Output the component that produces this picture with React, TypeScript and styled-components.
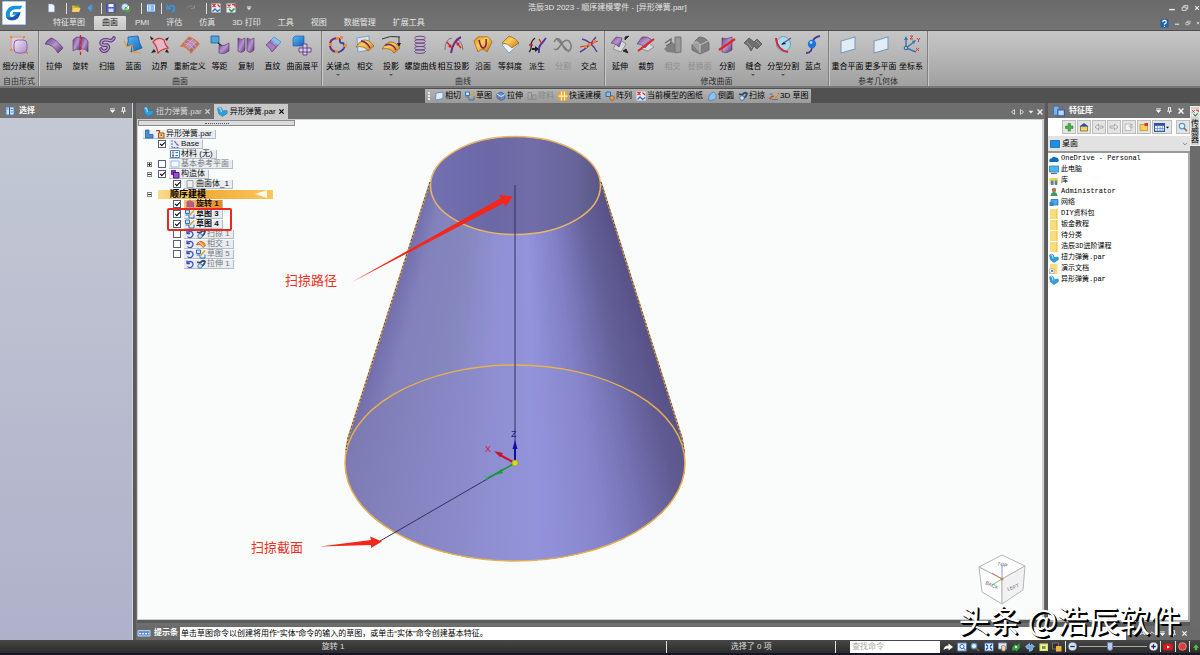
import React from "react";
import styled, { createGlobalStyle, css } from "styled-components";

const GlobalStyle = createGlobalStyle`
  * { box-sizing: border-box; }
  html, body { margin: 0; padding: 0; }
  body {
    background: #555;
    font-family: "Liberation Sans", "Noto Sans CJK SC", sans-serif;
    font-size: 8px;
    line-height: 10px;
    overflow: hidden;
  }
  button, input, select { font: inherit; color: inherit; }
  button { border: 0; background: none; padding: 0; margin: 0; }
  ul { list-style: none; margin: 0; padding: 0; }
`;

/* ---------- icons ---------- */

const Svg = styled.svg<{ $s: number }>`
  display: block;
  flex: none;
  width: ${(p) => p.$s}px;
  height: ${(p) => p.$s}px;
  overflow: visible;
`;

const sheet = "M1 10 Q3 6 8 3 Q14 2 19 9 L13 14 Q9 8 1 10Z";

const drawings: Record<string, React.ReactNode> = {
  subdivide: (
    <>
      <rect x="2" y="2" width="13" height="13" rx="3" fill="#d9cbe6" stroke="#e09a62" />
      <rect x="5" y="5" width="13" height="13" rx="4" fill="url(#lilac)" stroke="#8a62a8" />
      <path d="M1 1h2v2H1zM14 1h2v2h-2zM1 14h2v2H1zM17 17h2v2h-2z" fill="#e58a35" />
    </>
  ),
  extrudeSurf: <path d="M1 9 Q3 5 7 3 Q12 4 19 13 L14 18 Q9 9 1 9Z" fill="url(#purple)" stroke="#553070" strokeWidth=".7" />,
  revolveSurf: (
    <>
      <path d="M3 5 Q6 1 10 2 V15 Q6 13 3 16Z" fill="url(#purple)" stroke="#553070" strokeWidth=".6" />
      <path d="M11 2 Q16 2 18 6 V17 Q15 13 11 14Z" fill="url(#purple)" stroke="#553070" strokeWidth=".6" />
      <path d="M10.5 0V20" stroke="#e02020" strokeWidth="1.3" strokeDasharray="4 1.5" />
    </>
  ),
  sweepSurf: (
    <>
      <path d="M17 3 Q15 7 11 5 Q5 4 4 8 Q5 11 10 10 Q13 12 10 15 Q6 18 4 14" fill="none" stroke="#5f3a80" strokeWidth="3.600" strokeLinecap="round" />
      <path d="M17 3 Q15 7 11 5 Q5 4 4 8 Q5 11 10 10 Q13 12 10 15 Q6 18 4 14" fill="none" stroke="#b79bcb" strokeWidth="1.400" strokeLinecap="round" />
    </>
  ),
  loft: (
    <>
      <path d="M5 2 L15 1 Q16 8 19 13 L8 17 L9 10 L4 11 Q6 6 5 2Z" fill="url(#blue)" stroke="#1559a8" strokeWidth=".8" />
      <path d="M1 6 L4 12 L9 10 L10 17 L18 18" stroke="#e3a02c" strokeWidth="1.2" fill="none" />
    </>
  ),
  boundary: (
    <>
      <path d="M3 7 Q8 1 14 5 Q15 10 18 13 Q12 14 8 18 Q7 11 3 7Z" fill="#e3b7c5" stroke="#d0343c" strokeWidth="1.2" />
      <path d="M0 1l4 3-3 1zM19 2l-4 2 2 2zM1 18l3-4 2 3zM19 18l-4-1 2-3z" fill="#222" />
    </>
  ),
  redefine: (
    <>
      <path d="M1 11 L9 2 Q15 4 19 9 L11 18 Q7 11 1 11Z" fill="url(#purple)" stroke="#e8762a" strokeWidth="1.3" />
      <path d="M4 8 Q11 9 14 15 M7 5 Q14 7 16 12 M6 11 L13 4 M9 14 L16 7" stroke="#e9b9a0" strokeWidth=".7" fill="none" />
    </>
  ),
  offset: (
    <>
      <path d="M1 1h8v7H1z" fill="#4fa6de" stroke="#1e5d96" strokeWidth=".8" />
      <path d="M8 8l4 3" stroke="#222" strokeWidth="1.2" />
      <path d="M9 10 Q14 12 19 8 V16 Q14 20 9 18Z" fill="url(#purple)" stroke="#553070" strokeWidth=".6" />
    </>
  ),
  copySurf: (
    <>
      <path d="M2 3 Q6 6 9 3 V15 Q6 19 2 16Z" fill="url(#purple)" stroke="#553070" strokeWidth=".6" />
      <path d="M11 3 Q15 6 18 3 V15 Q15 19 11 16Z" fill="url(#purple)" stroke="#553070" strokeWidth=".6" />
    </>
  ),
  ruled: (
    <>
      <path d="M3 10 L11 2 L18 7 L9 17 Q7 12 3 10Z" fill="url(#purple)" stroke="#6b3d88" strokeWidth=".7" />
      <path d="M8 5 L11 2 L18 7 L15 10Z" fill="#7cc6e8" />
      <path d="M3 10 L6 7 Q11 9 13 12 L9 17 Q7 12 3 10Z" fill="#a77cc0" stroke="#6b3d88" strokeWidth=".5" />
    </>
  ),
  flatten: (
    <>
      <path d="M1 3l2-2h9v8l-2 2H1z" fill="url(#blue)" stroke="#1559a8" strokeWidth=".6" />
      <path d="M7 13h12v4H7zM11 9h4v11h-4z" fill="#dccbe8" stroke="#5f3a80" strokeWidth=".9" />
    </>
  ),
  keypoint: (
    <>
      <path d="M9 3 Q1 4 2 11 Q3 16 8 17" fill="none" stroke="#6b2f7c" strokeWidth="2" />
      <path d="M12 3 Q11 9 15 8 Q19 12 13 16 Q10 18 8 17" fill="none" stroke="#4a3a9a" strokeWidth="1.8" />
      <path d="M8 2h3v3H8zM7 15h3v3H7zM16 9h3v3h-3zM1 8h3v3H1zM12 1h3v3h-3z" fill="#ef8b2c" />
    </>
  ),
  intersectCrv: (
    <>
      <path d="M2 3 L14 1 V15 L3 17Z" fill="#d7e6f2" stroke="#5b8bb5" strokeWidth=".7" />
      <path d={sheet} transform="translate(0 2)" fill="url(#orange)" stroke="#9a5b10" strokeWidth=".7" />
      <path d="M6 6 Q12 7 15 13" stroke="#7a2168" strokeWidth="1.4" fill="none" />
    </>
  ),
  project: (
    <>
      <path d="M1 4 Q9 0 19 2 M18 2v7" stroke="#333" strokeWidth="1" fill="none" />
      <path d="M16 8h4l-2 4z" fill="#222" />
      <path d={sheet} transform="translate(0 4)" fill="url(#orange)" stroke="#9a5b10" strokeWidth=".7" />
      <path d="M4 10 Q12 8 15 15" stroke="#7a2168" strokeWidth="1.4" fill="none" />
    </>
  ),
  helix: (
    <g fill="none" stroke="#704690" strokeWidth="1">
      <ellipse cx="9" cy="3" rx="5.5" ry="1.8" />
      <ellipse cx="9" cy="6.4" rx="5.5" ry="1.8" />
      <ellipse cx="9" cy="9.8" rx="5.5" ry="1.8" />
      <ellipse cx="9" cy="13.2" rx="5.5" ry="1.8" />
      <ellipse cx="9" cy="16.600" rx="5.5" ry="1.8" />
    </g>
  ),
  crossProject: (
    <>
      <path d="M1 15 Q1 4 8 3 M19 15 Q18 5 12 4" fill="none" stroke="#777" strokeWidth="1" />
      <path d="M7 18 Q9 6 17 2" fill="none" stroke="#67308a" strokeWidth="2" />
      <path d="M3 7l3 4M14 9l3 4" stroke="#d22" strokeWidth="1.4" />
      <path d="M8 13l-4-1 3-3zM12 7l4 1-3 3z" fill="#d22" />
    </>
  ),
  contour: (
    <>
      <path d="M1 6 Q5 0 10 2 Q16 0 19 7 L14 17 Q10 12 5 17Z" fill="url(#orange)" stroke="#9a5b10" strokeWidth=".7" />
      <path d="M6 5 Q8 14 11 13 Q14 11 13 4" fill="none" stroke="#7a1f50" strokeWidth="1.5" />
    </>
  ),
  isocline: (
    <>
      <path d="M2 10 L12 2 L19 9 L9 18Z" fill="#eef3f8" stroke="#6a94c0" strokeWidth=".8" />
      <path d="M2 8 L9 1 Q16 3 19 8 L12 13 Q8 8 2 8Z" fill="url(#orange)" stroke="#9a5b10" strokeWidth=".7" />
    </>
  ),
  derive: (
    <>
      <path d="M2 17 Q5 14 4 9 Q5 5 8 3" stroke="#222" strokeWidth="1.3" fill="none" />
      <path d="M12 18 Q11 12 15 8 L19 3" stroke="#4c3aa8" strokeWidth="2" fill="none" />
      <path d="M2 10h4M12 4l3 5" stroke="#d22" strokeWidth="1.4" />
      <path d="M5 13h3v-2l4 3-4 3v-2H5z" fill="#222" />
    </>
  ),
  splitCrv: (
    <path d="M1 7 Q5 0 9 8 Q12 18 17 15 Q20 11 16 6 Q12 3 7 11 Q4 16 1 14 M3 3l13 14" fill="none" stroke="#7c7c7c" strokeWidth="1.5" />
  ),
  crossPoint: (
    <>
      <path d="M1 17 Q9 13 17 2 M3 4 Q12 6 18 17" fill="none" stroke="#5a3c9c" strokeWidth="1.4" />
      <path d="M1 12 Q10 11 19 6" stroke="#c33" strokeWidth="1" fill="none" />
      <path d="M9 8h3v3H9zM14 5h3v3h-3zM5 10h3v3H5z" fill="#ef7f2c" />
    </>
  ),
  extend: (
    <>
      <path d="M9 4 L16 9 L11 17 L3 14Z" fill="#d6d8dc" stroke="#777" strokeWidth=".7" />
      <path d="M1 8 L6 2 L12 3 Q11 8 9 12 Q5 8 1 8Z" fill="url(#purple)" stroke="#553070" strokeWidth=".6" />
      <path d="M15 5l4-4-4 1zM13 16l5 2-2-4z" fill="#222" stroke="#222" strokeWidth=".8" />
    </>
  ),
  trim: (
    <>
      <path d="M9 5 L18 12 L12 16 L5 14Z" fill="#d8d8dd" stroke="#777" strokeWidth=".7" />
      <path d="M1 9 L6 2 Q12 1 16 5 L9 13 Q5 8 1 9Z" fill="url(#purple)" stroke="#553070" strokeWidth=".6" />
      <path d="M2 16 L18 4" stroke="#e02525" strokeWidth="2" />
    </>
  ),
  intersectGray: (
    <>
      <path d="M1 14 L9 7 L12 9 V18 L4 17Z" fill="#808080" />
      <path d="M12 2h6v15l-6 1z" fill="#999" stroke="#757575" />
      <path d="M2 8l6-4v4M3 11l5-3" stroke="#6a6a6a" strokeWidth="1.4" fill="none" />
    </>
  ),
  replaceGray: (
    <>
      <path d="M2 9 L9 2 Q16 2 19 8 V15 L10 19 L2 15Z" fill="#808080" stroke="#666" strokeWidth=".8" />
      <path d="M2 9 Q7 4 10 10 L10 18" fill="#9e9e9e" stroke="#c2c2c2" strokeWidth="1" />
      <path d="M10 10 L18 6" stroke="#c2c2c2" />
    </>
  ),
  splitSurf: (
    <>
      <path d="M5 3 Q9 5 15 2 V15 Q10 19 5 17Z" fill="url(#purple)" stroke="#553070" strokeWidth=".6" />
      <path d="M2 15 L18 4" stroke="#e02525" strokeWidth="2.2" />
    </>
  ),
  stitch: (
    <>
      <path d="M1 8 L6 3 L11 7 L14 4 L19 9 L14 14 L11 11 L8 16 Q5 9 1 8Z" fill="#6f6f6f" stroke="#565656" strokeWidth=".8" />
      <path d="M4 7l5 6M13 6l4 4" stroke="#9c9c9c" />
    </>
  ),
  partingSplit: (
    <>
      <ellipse cx="10.500" cy="9" rx="7" ry="7.500" fill="#a8dcec" stroke="#5398b0" strokeWidth=".8" />
      <path d="M3 3 Q4 15 15 17" stroke="#d92340" strokeWidth="2" fill="none" />
      <path d="M9 9 L18 3" stroke="#7b4a9a" strokeWidth="1.3" />
      <path d="M8 10l5-1-2-2z" fill="#222" />
    </>
  ),
  bluedot: (
    <>
      <path d="M3 18 Q10 18 9 9 Q10 2 17 1" fill="none" stroke="#4a3a98" strokeWidth="1.8" />
      <circle cx="9" cy="9" r="4.2" fill="#1d73dc" />
      <circle cx="8" cy="7.5" r="1.4" fill="#a9d4ff" />
    </>
  ),
  plane: <path d="M3 6 L17 2 V14 L3 18Z" fill="#e2ecf5" stroke="#7d9cbc" strokeWidth="1.1" />,
  csys: (
    <>
      <path d="M5 4V13L15 17M5 13L13 7" stroke="#3a74b0" strokeWidth="1.4" fill="none" />
      <circle cx="5" cy="13" r="1.800" fill="#9cc4e6" stroke="#2d5f92" />
      <path d="M3 5l2-4 2 4zM11 6l4-1-2 4z" fill="#3a74b0" />
      <path d="M9 1h3l-3 3h3M16 3l1.500 2 1.500-2M17.500 5v2M15 13l3 3M18 13l-3 3" stroke="#d93636" strokeWidth="1" fill="none" />
    </>
  ),
  file: <path d="M5 2h8l4 4v12H5z" fill="#eef4fb" stroke="#8aa6c6" />,
  open: (
    <>
      <path d="M2 5h6l2 2h7v10H2z" fill="#e2a92f" />
      <path d="M5 10h14l-3 8H2z" fill="#f7d466" />
      <path d="M9 6l5-4 3 5z" fill="#43a843" />
    </>
  ),
  back: <path d="M12 4L5 10l6 6M5 10h8" fill="none" stroke="#4b9de6" strokeWidth="3.500" />,
  save: (
    <>
      <path d="M1 2h18v16H1z" fill="#4b66c8" stroke="#2b3f8c" />
      <path d="M5 2h10v6H5z" fill="#eef" />
      <path d="M5 11h10v7H5z" fill="#cfd8f5" />
    </>
  ),
  globe: (
    <>
      <circle cx="8" cy="8" r="7" fill="#cfe3f4" stroke="#4b7fb0" />
      <circle cx="13" cy="13" r="6" fill="#4aa04c" />
      <path d="M9 5l6 6M15 6v6H9" stroke="#fff" strokeWidth="2" fill="none" />
    </>
  ),
  listbox: (
    <>
      <path d="M1 2h18v16H1z" fill="#e8f1fb" stroke="#3c79c0" strokeWidth="2" />
      <path d="M4 6h3M4 10h3M4 14h3M9 6h7M9 10h7M9 14h7" stroke="#3c79c0" strokeWidth="2" />
    </>
  ),
  undo: (
    <>
      <path d="M7 7q9-4 10 3q0 5-5 8" fill="none" stroke="#3a94e6" strokeWidth="3.500" />
      <path d="M1 2v11h10z" fill="#3a94e6" />
    </>
  ),
  redo: <path d="M17 4v7h-7M16 10Q9 2 3 9" fill="none" stroke="#8a8a8a" strokeWidth="2" />,
  axisRed: (
    <>
      <path d="M1 1h18v18H1z" fill="#e6ecf6" />
      <path d="M3 2l6 6M9 2L3 8M13 3l5 5" stroke="#d92b2b" strokeWidth="2.500" />
      <path d="M3 17l5-5 5 5 5-4" stroke="#2d6cc0" strokeWidth="2.500" fill="none" />
    </>
  ),
  axisGreen: (
    <>
      <path d="M1 1h18v18H1z" fill="#e9eef2" />
      <path d="M3 3l6 6M9 3l-6 6M12 3h6v5" stroke="#d92b2b" strokeWidth="2.500" fill="none" />
      <path d="M6 12l5 5 6-6" stroke="#2c8c43" strokeWidth="3" fill="none" />
    </>
  ),
  parallelogram: <path d="M4 4L18 2V15L3 18Z" fill="#e4edf8" stroke="#6c8fc0" strokeWidth="2" />,
  sketch: (
    <>
      <path d="M1 2h8v7H1z" fill="#cfe2f6" stroke="#3474bb" strokeWidth="2" />
      <path d="M1 12h7v6h10v-7" fill="none" stroke="#3474bb" strokeWidth="2" />
      <path d="M9 13L18 3" stroke="#e0a22b" strokeWidth="3" />
    </>
  ),
  solid: (
    <>
      <path d="M2 6L10 2l8 5v8l-8 4-8-5z" fill="#5b93cf" stroke="#2d5f9c" strokeWidth="1.500" />
      <path d="M2 6l8 5 8-4" stroke="#fff" strokeWidth="1.500" fill="none" />
      <path d="M2 13l8 5v-5z" fill="#d5455a" />
    </>
  ),
  cutGray: <path d="M2 3h7v14H2zM11 8h7v9h-7z" fill="none" stroke="#8b8b8b" strokeWidth="2" />,
  quick: (
    <>
      <path d="M1 1h18v18H1z" fill="#f5a11f" />
      <path d="M7 1v18M13 1v18M1 10h18" stroke="#fff3c8" strokeWidth="2.500" />
    </>
  ),
  pattern: (
    <>
      <path d="M2 2h9v9H2z" fill="#8fc0ec" stroke="#2d6cad" strokeWidth="2" />
      <circle cx="14" cy="14" r="4.500" fill="#e7a053" stroke="#8e5417" strokeWidth="1.500" />
    </>
  ),
  round: <path d="M3 18Q3 6 13 2L18 6V15L9 19Z" fill="#8cc4f0" stroke="#3f82c0" strokeWidth="1.500" />,
  sweep: (
    <>
      <path d="M2 6Q9 9 11 5Q14 2 18 5Q17 12 10 15" fill="none" stroke="#2b4c74" strokeWidth="3.500" />
      <circle cx="8" cy="14" r="4.500" fill="#cfe4f8" stroke="#2b5f9c" strokeWidth="1.500" />
    </>
  ),
  sketch3d: (
    <>
      <path d="M1 16l6-6 5 3 7-9" fill="none" stroke="#c8442c" strokeWidth="2.500" />
      <path d="M9 15L18 5" stroke="#e7b33c" strokeWidth="2.500" />
      <path d="M1 6h6M5 17h13" stroke="#3567a8" strokeWidth="1.500" />
    </>
  ),
  part: (
    <>
      <path d="M1 4Q5 0 9 4L10 9L18 8Q20 11 18 14L10 19L3 14Z" fill="#2f9fdc" stroke="#1878ae" strokeWidth="1" />
      <path d="M3 4q4-2 4 2l1 5" stroke="#b8e6fa" strokeWidth="2" fill="none" />
    </>
  ),
  partL: <path d="M3 2h7v9h8v7H3z" fill="#4c8fd8" stroke="#245a9a" strokeWidth="1.500" />,
  lock: (
    <>
      <path d="M7 8h11v10H7z" fill="#f6c98a" stroke="#9a5312" strokeWidth="2" />
      <path d="M2 3h7v5" fill="none" stroke="#b04a2a" strokeWidth="2.500" />
      <path d="M11 11h3v3h-3z" fill="#9a5312" />
    </>
  ),
  base: (
    <>
      <path d="M4 2v15h14" fill="none" stroke="#4b71c4" strokeWidth="2" strokeDasharray="4 2" />
      <path d="M9 4l3 4M12 9l5 4" stroke="#7d5bbd" strokeWidth="2.500" />
    </>
  ),
  material: (
    <>
      <path d="M1 3h18v14H1z" fill="#eaf3fc" stroke="#4b88c8" strokeWidth="2" />
      <path d="M4 5h4v4H4z" fill="#e07b2b" />
      <path d="M4 11h4v4H4z" fill="#3c79c0" />
      <path d="M11 7h5M11 13h5" stroke="#3c79c0" strokeWidth="2" />
    </>
  ),
  planeGray: <path d="M2 4h16v12H2z" fill="#f3f8fd" stroke="#a3bedb" strokeWidth="2" />,
  construct: (
    <>
      <path d="M2 2h10v10H2z" fill="#7a2fb3" />
      <path d="M7 7h11v11H7z" fill="#9b4fd0" stroke="#4f1580" strokeWidth="2" />
    </>
  ),
  bodyBox: <path d="M4 3h12v14H4z" fill="#f1f1f1" stroke="#9aa0a8" strokeWidth="2" />,
  revolve: (
    <>
      <path d="M3 6q3-4 6-2v12q-4-1-6 2zM11 4q5 0 7 3v11q-3-3-7-2z" fill="#9c5aa8" />
      <path d="M10 1v18" stroke="#d93636" strokeWidth="2" />
    </>
  ),
  loop: <path d="M4 3v6h6M4 9Q8 3 14 6Q19 12 12 17Q7 18 5 15" fill="none" stroke="#3a50c4" strokeWidth="2.500" />,
  intersectS: (
    <>
      <path d="M1 12Q4 3 11 5Q17 6 19 13L14 17Q10 9 1 12Z" fill="#ef9640" stroke="#b2540f" strokeWidth="1.500" />
      <path d="M3 3l13 12" stroke="#fff2e0" strokeWidth="1.500" />
    </>
  ),
  panelBlue: (
    <>
      <path d="M2 2h16v16H2z" fill="#d7e8fa" stroke="#4d84c4" strokeWidth="2" />
      <path d="M9 2v16" stroke="#2f62a8" strokeWidth="2" />
      <path d="M11 7h5M11 12h5M4 6h3" stroke="#4d84c4" strokeWidth="2" />
    </>
  ),
  libFolder: (
    <>
      <path d="M1 2h9v15H1z" fill="#79b3ec" stroke="#2d63a8" />
      <path d="M8 8h11v10H8z" fill="#b8d6f6" stroke="#2d63a8" strokeWidth="2" />
    </>
  ),
  plus: <path d="M8 3h5v5h5v5h-5v5H8v-5H3V8h5z" fill="#45b443" stroke="#1f7a24" strokeWidth="1" />,
  home: (
    <>
      <path d="M3 8h14v10H3z" fill="#f4d06c" stroke="#7d6420" strokeWidth="1.500" />
      <path d="M1 9l9-7 9 7z" fill="#2c4db0" />
    </>
  ),
  arrowL: <path d="M2 10l7-6v4h9v4H9v4z" fill="#e6e6e6" stroke="#9a9a9a" strokeWidth="1.500" />,
  arrowR: <path d="M18 10l-7-6v4H2v4h9v4z" fill="#e6e6e6" stroke="#9a9a9a" strokeWidth="1.500" />,
  up: <path d="M2 4h12v13H2zM10 9l6-5v8z" fill="#f4f4f4" stroke="#aaa" strokeWidth="1.500" />,
  newFolder: (
    <>
      <path d="M2 5h15v12H2z" fill="#f6cf62" stroke="#c18e20" strokeWidth="1.500" />
      <path d="M11 2h7v6h-7z" fill="#e0352b" />
    </>
  ),
  grid: (
    <>
      <path d="M1 3h18v14H1z" fill="#fff" stroke="#2d55a8" strokeWidth="2" />
      <path d="M1 3h18v4H1z" fill="#2d55a8" />
      <path d="M6 7v10M11 7v10M15 7v10M1 12h18" stroke="#6a8fd0" strokeWidth="1.500" />
    </>
  ),
  search: (
    <>
      <circle cx="8" cy="8" r="5.500" fill="#e5f3ff" stroke="#5798d8" strokeWidth="2.500" />
      <path d="M12 12l6 6" stroke="#7a6a50" strokeWidth="3" />
    </>
  ),
  desktop: <path d="M1 3h18v14H1z" fill="#1c8fe0" stroke="#0d66ab" strokeWidth="1.500" />,
  cloud: <path d="M3 16q-4-1-2-5q1-3 4-2q3-6 9-2q5 0 5 4q2 4-3 5z" fill="#0f6cbd" />,
  pc: (
    <>
      <path d="M1 2h18v12H1z" fill="#4fb4ee" stroke="#1f7fc0" strokeWidth="1.500" />
      <path d="M4 17h12" stroke="#5a6a78" strokeWidth="2.500" />
    </>
  ),
  libs: (
    <>
      <path d="M1 4h17v13H1z" fill="#f6cc55" />
      <path d="M4 9h5v9H4zM12 9h4v9h-4z" fill="#3f86d4" />
    </>
  ),
  user: (
    <>
      <circle cx="10" cy="6" r="4.500" fill="#a87b52" />
      <path d="M3 18q1-8 7-8t7 8z" fill="#3d9a62" />
    </>
  ),
  network: (
    <>
      <path d="M4 3h14v11H4z" fill="#4da7e8" stroke="#1f6fb4" strokeWidth="1.500" />
      <path d="M1 8h8v8H1z" fill="#2c87cf" />
    </>
  ),
  folder: (
    <>
      <path d="M2 0h15v20H2z" fill="#fbdc7d" />
      <path d="M14 0h3v20h-3z" fill="#f3cb5c" />
    </>
  ),
  folderLink: (
    <>
      <path d="M2 0h15v20H2z" fill="#fbdc7d" />
      <path d="M1 10h9v9H1z" fill="#fff" stroke="#888" />
      <path d="M3 17l4-4M4 13h3v3" stroke="#2060b0" strokeWidth="1.500" fill="none" />
    </>
  ),
  goArrow: <path d="M1 16Q2 7 11 7V3l9 7-9 7v-4Q5 12 1 16Z" fill="#f6f6f6" />,
  zoomArea: (
    <>
      <path d="M1 2h18v16H1z" fill="#dcebfa" stroke="#4d84c4" strokeWidth="2" />
      <circle cx="10" cy="9" r="4" fill="#fff" stroke="#2f62a8" strokeWidth="2" />
      <path d="M13 12l5 5" stroke="#2f62a8" strokeWidth="2" />
    </>
  ),
  fit: (
    <>
      <path d="M1 2h18v16H1z" fill="#e9f1fb" stroke="#3568b4" strokeWidth="2" />
      <path d="M4 5l4 4M16 5l-4 4M4 15l4-4M16 15l-4-4" stroke="#2450a0" strokeWidth="3" />
    </>
  ),
  pan: (
    <>
      <path d="M1 2h16v12H1z" fill="#dfe8f4" stroke="#7a97bd" strokeWidth="2" />
      <path d="M7 8q5-3 9 2l-2 8H8z" fill="#f4d8b8" stroke="#875" strokeWidth="1.500" />
    </>
  ),
  rotateG: (
    <>
      <path d="M2 12l6-8 3 3 6-5 1 9-7 8-3-3-5 2z" fill="#2fa33c" />
      <circle cx="10" cy="10" r="2.500" fill="#d7f5d5" />
    </>
  ),
  views: <path d="M1 9l8-6v4h4V4l6 5-4 3v4l-6 3v-5H5z" fill="#62a8e4" stroke="#d6eaff" strokeWidth="1" />,
  shade: (
    <>
      <path d="M1 3h17v15H1z" fill="#f3df62" />
      <path d="M5 7h9v8H5z" fill="#55a93d" stroke="#fff" strokeWidth="1.500" />
    </>
  ),
  color: (
    <>
      <path d="M1 2h12v12H1z" fill="#2e2e34" stroke="#aaa" />
      <path d="M8 8h11v11H8z" fill="#efb63a" />
    </>
  ),
  minusC: (
    <>
      <circle cx="10" cy="10" r="9" fill="#d8e4f4" stroke="#7991b4" />
      <path d="M5 10h10" stroke="#223a6c" strokeWidth="3" />
    </>
  ),
  plusC: (
    <>
      <circle cx="10" cy="10" r="9" fill="#eef2f8" stroke="#7991b4" />
      <path d="M5 10h10M10 5v10" stroke="#1d2c50" strokeWidth="3" />
    </>
  ),
  play: (
    <>
      <rect x="0" y="3" width="20" height="14" rx="4" fill="#d9151b" />
      <path d="M8 7l6 3-6 3z" fill="#fff" />
    </>
  ),
  record: <circle cx="10" cy="10" r="8.500" fill="#e23a36" stroke="#f3b0ab" strokeWidth="1.500" />,
  upload: <path d="M2 12l8-9 8 9h-5v6H7v-6z" fill="#54b848" />,
  help: (
    <>
      <path d="M1 1h18v18H1z" fill="#1d63ad" />
      <path d="M6 7q0-4 4-4t4 4q0 2-4 4v2M10 15v3" fill="none" stroke="#fff" strokeWidth="2.500" />
    </>
  ),
  prompt: (
    <>
      <path d="M0 6h20v9H0z" fill="#5b92d8" stroke="#cfe0f5" strokeWidth="1.500" />
      <path d="M2 11h16" stroke="#fff" strokeWidth="2" strokeDasharray="3 2" />
    </>
  ),
  min: <path d="M3 14h14" stroke="#eee" strokeWidth="3.500" />,
  restore: <path d="M7 8V4h10v8h-4M3 8h10v8H3z" fill="none" stroke="#eee" strokeWidth="2" />,
  close: <path d="M4 4l12 12M16 4L4 16" stroke="currentColor" strokeWidth="3.500" />,
  drop: <path d="M3 5h14M4 9h12l-6 7z" fill="currentColor" stroke="currentColor" strokeWidth="2" />,
  tri: <path d="M4 7h12l-6 7z" fill="currentColor" />,
  triL: <path d="M14 4v12L6 10z" fill="none" stroke="currentColor" strokeWidth="2" />,
  triR: <path d="M6 4v12l8-6z" fill="none" stroke="currentColor" strokeWidth="2" />,
  caretUp: <path d="M3 13l7-7 7 7" fill="none" stroke="currentColor" strokeWidth="2.500" />,
  pin: <path d="M6 2h8M7 2v9M13 2v9M3 12h14M10 12v7" stroke="currentColor" strokeWidth="2.500" />,
  chevron: <path d="M3 6l7 7 7-7" fill="none" stroke="#555" strokeWidth="2" />,
};

const Icon = ({ name, size = 10 }: { name: string; size?: number }) => (
  <Svg $s={size} viewBox="0 0 20 20" aria-hidden="true">
    {drawings[name]}
  </Svg>
);

const GradientDefs = styled.svg`
  position: absolute;
  width: 0;
  height: 0;
`;

const SharedGradients = () => (
  <GradientDefs aria-hidden="true">
    <defs>
      <linearGradient id="purple" x1="0" y1="0" x2="1" y2="1">
        <stop offset="0" stopColor="#6a3f8c" />
        <stop offset=".5" stopColor="#b795cb" />
        <stop offset="1" stopColor="#563073" />
      </linearGradient>
      <linearGradient id="lilac" x1="0" y1="0" x2="1" y2="1">
        <stop offset="0" stopColor="#f2eaf8" />
        <stop offset="1" stopColor="#a98cc4" />
      </linearGradient>
      <linearGradient id="blue" x1="0" y1="0" x2="1" y2="1">
        <stop offset="0" stopColor="#5ab8f2" />
        <stop offset="1" stopColor="#1560bc" />
      </linearGradient>
      <linearGradient id="orange" x1="0" y1="0" x2="1" y2="1">
        <stop offset="0" stopColor="#d9820f" />
        <stop offset=".4" stopColor="#fbd05c" />
        <stop offset="1" stopColor="#c9700c" />
      </linearGradient>
    </defs>
  </GradientDefs>
);

/* ---------- window chrome ---------- */

const AppWindow = styled.div`
  display: flex;
  flex-direction: column;
  height: 100vh;
  white-space: nowrap;
  position: relative;
`;

const Header = styled.header`
  display: flex;
  height: 31px;
  background: linear-gradient(#6a6a6a, #747474);
  border-bottom: 1px solid #4e4e4e;
  color: #e4e4e4;
`;

const Logo = styled.div`
  flex: none;
  width: 24px;
  height: 24px;
  margin: 1px 2px;
  background: #fff;
  border: 1px solid #a9cdf0;
  border-radius: 1px;
`;

const HeaderRows = styled.div`
  flex: 1;
  display: flex;
  flex-direction: column;
`;

const TitleRow = styled.div`
  display: flex;
  align-items: center;
  height: 16px;
`;

const QuickBar = styled.div`
  flex: 0 0 500px;
  display: flex;
  align-items: center;
  padding-left: 18px;
  gap: 4px;
`;

const QuickButton = styled.button<{ $wide?: boolean }>`
  width: ${(p) => (p.$wide ? 16 : 11)}px;
  height: 12px;
  display: flex;
  align-items: center;
`;

const QuickDivider = styled.span`
  width: 1px;
  height: 11px;
  background: #ddd;
`;

const Title = styled.h1`
  flex: 1;
  margin: 0;
  font-size: 8px;
  font-weight: 400;
  line-height: 16px;
`;

const WindowButtons = styled.div`
  display: flex;
  align-items: center;
  gap: 5px;
  color: #eee;
`;

const TabRow = styled.nav`
  display: flex;
  height: 14px;
  padding-left: 17px;
`;

const MenuTab = styled.button<{ $active?: boolean }>`
  padding: 0 8px;
  margin-right: 1px;
  color: #e6e6e6;
  line-height: 14px;
  ${(p) =>
    p.$active &&
    css`
      background: linear-gradient(#dcdcdc, #c6c6c6);
      border-radius: 1px 1px 0 0;
      color: #111;
    `}
`;

const TabSpace = styled.span`
  flex: 1;
`;

const Ribbon = styled.section`
  display: flex;
  flex: none;
  height: 57px;
  background: linear-gradient(#c6c6c6, #b4b4b4 50%, #a0a0a0);
  border-bottom: 2px solid #777;
`;

const Group = styled.div<{ $w: number }>`
  flex: 0 1 ${(p) => p.$w}px;
  display: flex;
  flex-direction: column;
  border-right: 1px solid #808080;
  box-shadow: 1px 0 0 #c8c8c8;
  padding: 4px 2px 0;
`;

const GroupItems = styled.div`
  display: flex;
  justify-content: space-between;
  height: 42px;
`;

const GroupTitle = styled.div`
  text-align: center;
  color: #2c2c2c;
  line-height: 9px;
`;

const Tool = styled.button<{ $chars: number; $off?: boolean }>`
  flex: none;
  width: ${(p) => (p.$chars > 3 ? 33 : p.$chars === 3 ? 28 : 26)}px;
  display: flex;
  flex-direction: column;
  align-items: center;
  color: ${(p) => (p.$off ? "#8e8e8e" : "#000")};
`;

const ToolLabel = styled.span`
  margin-top: 7px;
  line-height: 10px;
`;

const ToolArrow = styled.span`
  border: 2px solid transparent;
  border-top-color: #555;
  border-bottom: 0;
  margin-top: 2px;
`;

const CommandBand = styled.div`
  flex: none;
  height: 15px;
  padding: 1px 0 0 425px;
  background: #515151;
  display: flex;
`;

const CommandBar = styled.div`
  display: flex;
  align-items: center;
  gap: 4px;
  height: 14px;
  padding: 0 3px;
  background: linear-gradient(#b4b4b4, #9a9a9a);
`;

const Grip = styled.span`
  width: 2px;
  height: 8px;
  border-left: 2px dotted #eee;
`;

const Command = styled.button<{ $off?: boolean }>`
  display: flex;
  align-items: center;
  gap: 1px;
  color: ${(p) => (p.$off ? "#858585" : "#000")};
`;

/* ---------- work area ---------- */

const Main = styled.main`
  flex: 1;
  min-height: 0;
  display: flex;
  background: #5a5a5a;
`;

const PanelHeader = styled.div`
  flex: none;
  display: flex;
  align-items: center;
  gap: 4px;
  height: 15px;
  padding: 0 5px;
  background: #737373;
  color: #fff;
`;

const PanelTitle = styled.h2`
  flex: 1;
  margin: 0;
  font-size: 8px;
  line-height: 15px;
`;

const SelectPanel = styled.aside`
  flex: none;
  width: 133px;
  display: flex;
  flex-direction: column;
  background: linear-gradient(#c4c9d4, #afb1ca);
  border-right: 1px solid #d0d0d6;
`;

const WorkColumn = styled.div`
  flex: 1;
  min-width: 0;
  display: flex;
  flex-direction: column;
  margin-left: 3px;
`;

const WorkRow = styled.div`
  flex: 1;
  min-height: 0;
  display: flex;
`;

const Documents = styled.section`
  flex: 1;
  min-width: 0;
  display: flex;
  flex-direction: column;
  background: #6e6e6e;
`;

const DocTabs = styled.div`
  flex: none;
  display: flex;
  align-items: flex-end;
  height: 16px;
  padding: 0 1px 0 4px;
  color: #eee;
`;

const DocTab = styled.button<{ $active?: boolean }>`
  display: flex;
  align-items: center;
  gap: 2px;
  height: 15px;
  padding: 0 3px;
  color: ${(p) => (p.$active ? "#000" : "#d8d8d8")};
  background: ${(p) => (p.$active ? "#c9c9c9" : "none")};
`;

const DocNav = styled.div`
  margin-left: auto;
  display: flex;
  align-items: center;
  height: 15px;
  gap: 1px;
`;

const Canvas = styled.div`
  flex: 1;
  min-height: 0;
  position: relative;
  overflow: hidden;
  margin: 0 1px 6px 1px;
  background: #fafcfb;
  border: 1px solid #cfcfcf;
  border-width: 1px 2px 1px 1px;
  box-shadow: 0 3px 0 #5a5a5a;
`;

const Scene = styled.svg`
  display: block;
  width: 905px;
  height: 500px;
`;

const TreeGrip = styled.div`
  position: absolute;
  left: 0;
  top: 0;
  width: 157px;
  height: 6px;
  background: #dcdcdc;
  border: 1px solid #8c8c8c;
  display: flex;
  justify-content: center;
  align-items: center;
  &::after {
    content: "";
    width: 24px;
    border-top: 1px dotted #456;
  }
`;

const Tree = styled.ul`
  position: absolute;
  left: 5px;
  top: 9px;
`;

const TreeRow = styled.li<{ $level: number }>`
  display: flex;
  align-items: center;
  height: 10px;
  padding-left: ${(p) => (p.$level === 0 ? 0 : 4 + (p.$level - 1) * 15)}px;
`;

const Slot = styled.span`
  width: 11px;
  height: 10px;
  display: flex;
  align-items: center;
`;

const Expander = styled.button<{ $closed?: boolean }>`
  width: 5px;
  height: 5px;
  border: 1px solid #888;
  background:
    linear-gradient(#333, #333) center / 100% 1px no-repeat,
    linear-gradient(#333, #333) center / ${(p) => (p.$closed ? 1 : 0)}px 100% no-repeat,
    #fff;
`;

const Check = styled.input`
  appearance: none;
  margin: 0;
  width: 8px;
  height: 8px;
  border: 1px solid #56617a;
  background: #fff;
  display: grid;
  place-items: center;
  &:checked::after {
    content: "";
    width: 4px;
    height: 2px;
    margin-top: -1px;
    border-left: 1px solid #000;
    border-bottom: 1px solid #000;
    transform: rotate(-45deg);
  }
`;

const Node = styled.span<{ $tone?: string; $bold?: boolean }>`
  display: flex;
  align-items: center;
  gap: 1px;
  height: 9px;
  padding: 0 3px 0 1px;
  line-height: 9px;
  border-right: 1px solid #b5bdc8;
  border-bottom: 1px solid #b5bdc8;
  font-weight: ${(p) => (p.$bold ? 700 : 400)};
  color: ${(p) => (p.$tone === "dim" ? "#777" : "#111")};
  background: ${(p) => (p.$tone === "hot" ? "linear-gradient(90deg, #f7c069, #e8862a)" : "#e9edf2")};
`;

const HistoryBar = styled.div`
  display: flex;
  align-items: center;
  justify-content: space-between;
  width: 115px;
  height: 9px;
  padding: 0 6px 0 12px;
  font-size: 9px;
  line-height: 9px;
  font-weight: 700;
  background: linear-gradient(90deg, #fbdc90, #f0ab35 40%, #fbc65e);
`;

const HistoryEnd = styled.span`
  border: 4px solid transparent;
  border-right: 12px solid #fff8e4;
  border-left: 0;
`;

const RedFrame = styled.div`
  position: absolute;
  left: 29px;
  top: 88px;
  width: 65px;
  height: 23px;
  border: 2px solid #ea2a20;
  border-radius: 2px;
`;

const Annotation = styled.span<{ $x: number; $y: number }>`
  position: absolute;
  left: ${(p) => p.$x}px;
  top: ${(p) => p.$y}px;
  font-size: 13px;
  line-height: 16px;
  color: #f0301f;
`;

const Library = styled.aside`
  flex: none;
  width: 142px;
  display: flex;
  flex-direction: column;
  margin: 0 0 4px 3px;
  background: #fff;
`;

const LibTools = styled.div`
  flex: none;
  display: flex;
  justify-content: flex-end;
  align-items: center;
  gap: 1px;
  height: 18px;
`;

const LibButton = styled.button<{ $wide?: boolean }>`
  width: ${(p) => (p.$wide ? 20 : 14)}px;
  height: 14px;
  margin-right: ${(p) => (p.$wide ? 3 : 0)}px;
  display: flex;
  align-items: center;
  justify-content: center;
  background: #e4e4e4;
  border: 1px solid #bdbdbd;
`;

const Location = styled.label`
  flex: none;
  display: flex;
  align-items: center;
  gap: 2px;
  height: 17px;
  padding: 0 2px;
  background: #e2e2e2;
  border-bottom: 2px solid #999;
`;

const LocationSelect = styled.select`
  appearance: none;
  flex: 1;
  border: 0;
  background: none;
  padding: 0;
  line-height: 12px;
`;

const Files = styled.ul`
  flex: 1;
  border: 1px solid #aaa;
  border-width: 0 2px 2px 0;
`;

const FileRow = styled.li`
  display: flex;
  align-items: center;
  gap: 2px;
  height: 11px;
  padding-left: 1px;
  font-family: "Liberation Mono", "Noto Sans CJK SC", monospace;
  font-size: 7px;
  line-height: 11px;
  color: #000;
`;

const SideStrip = styled.div`
  flex: none;
  width: 10px;
  padding-top: 3px;
  background: #6b6b6b;
`;

const SideTab = styled.button`
  display: flex;
  flex-direction: column;
  align-items: center;
  gap: 3px;
  width: 10px;
  height: 40px;
  padding: 2px 0;
  background: #d2d2d2;
  border: 1px solid #eee;
  line-height: 8px;
  overflow: hidden;
  white-space: normal;
`;

const PromptBar = styled.div`
  flex: none;
  display: flex;
  align-items: center;
  height: 14px;
  background: #6a6a6a;
  color: #fff;
`;

const PromptTitle = styled.strong`
  display: flex;
  align-items: center;
  gap: 4px;
  width: 44px;
  padding-left: 2px;
`;

const PromptText = styled.p`
  flex: 1;
  height: 13px;
  margin: 0;
  padding-left: 1px;
  line-height: 14px;
  background: #fff;
  color: #000;
`;

const PromptTools = styled.div`
  display: flex;
  align-items: center;
  gap: 4px;
  width: 74px;
  padding-right: 12px;
  justify-content: flex-end;
`;

const StatusBar = styled.footer`
  flex: none;
  display: flex;
  align-items: center;
  height: 15px;
  background: linear-gradient(#474747, #2b2b2b);
  border-bottom: 2px solid #171624;
  color: #ddd;
`;

const StatusText = styled.span<{ $grow: number }>`
  flex: ${(p) => p.$grow} 1 0;
  height: 12px;
  line-height: 12px;
  text-align: center;
  border-right: 1px solid #ddd;
`;

const StatusTools = styled.div`
  flex: none;
  width: 364px;
  display: flex;
  align-items: center;
  gap: 2px;
  padding-left: 14px;
`;

const CommandSearch = styled.input`
  width: 90px;
  height: 12px;
  padding: 0 2px;
  border: 0;
  background: #fff;
  color: #222;
  &::placeholder {
    color: #aaa;
    opacity: 1;
  }
`;

const StatusButton = styled.button`
  width: 12px;
  display: flex;
  justify-content: center;
`;

const StatusDivider = styled.span`
  width: 1px;
  height: 11px;
  background: #ddd;
`;

const Zoom = styled.input`
  appearance: none;
  width: 68px;
  height: 10px;
  margin: 0;
  background: linear-gradient(#aaa, #aaa) center / 100% 1px no-repeat;
  &::-webkit-slider-thumb {
    appearance: none;
    width: 6px;
    height: 9px;
    background: #b9cde6;
    border: 1px solid #6480a8;
    border-radius: 0 0 3px 3px;
  }
`;

const Watermark = styled.div`
  position: absolute;
  right: 19px;
  bottom: 20px;
  font-family: "Noto Sans CJK SC", sans-serif;
  font-size: 31px;
  line-height: 32px;
  color: #fff;
  text-shadow: 1px 1px 0 #000, 2px 2px 0 #000;
  pointer-events: none;
`;

/* ---------- 3D scene ---------- */

type Stop = [number, number, number, number];

const bodyStops: Stop[] = [
  [0, 112, 108, 170],
  [0.1, 130, 129, 188],
  [0.28, 133, 135, 190],
  [0.42, 144, 144, 212],
  [0.56, 146, 147, 219],
  [0.7, 128, 126, 196],
  [0.85, 100, 96, 152],
  [1, 86, 80, 134],
];
const floorStops: Stop[] = [
  [0, 124, 121, 176],
  [0.15, 130, 129, 188],
  [0.35, 138, 138, 202],
  [0.55, 147, 147, 219],
  [0.7, 136, 135, 206],
  [0.82, 117, 113, 178],
  [0.93, 96, 91, 146],
  [1, 90, 84, 138],
];

const shade = (stops: Stop[], t: number) => {
  let i = 1;
  while (i < stops.length - 1 && stops[i][0] < t) i++;
  const a = stops[i - 1];
  const b = stops[i];
  const k = Math.min(1, Math.max(0, (t - a[0]) / (b[0] - a[0])));
  return `rgb(${[1, 2, 3].map((c) => Math.round(a[c] + (b[c] - a[c]) * k)).join(",")})`;
};

const WEDGES = 90;
const FAN_LEFT = 302;
const FAN_WIDTH = 426;

/* Shading bands run along the cone's rulings, which all meet at one apex.
   Each band reaches to the right edge, so that the next one covers it without a seam. */
const Fan = ({ stops, clip }: { stops: Stop[]; clip: string }) => (
  <g clipPath={`url(#${clip})`} shapeRendering="crispEdges">
    {Array.from({ length: WEDGES }, (_, i) => {
      const x0 = FAN_LEFT + (FAN_WIDTH * i) / WEDGES;
      return (
        <path key={i} d={`M515 -87L${x0} 570H${FAN_LEFT + FAN_WIDTH}Z`} fill={shade(stops, (i + 0.5) / WEDGES)} />
      );
    })}
  </g>
);

const ConeScene = () => (
  <Scene viewBox="138 120 905 500" role="img" aria-label="异形弹簧">
    <defs>
      <clipPath id="body">
        <path d="M430 182L348 438Q345 452 345 463A170 98 0 0 0 685 463Q685 452 682 438L601 182A85.500 49 0 0 1 430 182Z" />
      </clipPath>
      <clipPath id="floor">
        <ellipse cx="515" cy="463" rx="170" ry="98" />
      </clipPath>
      <linearGradient id="mouth">
        <stop offset="0" stopColor="#7370b2" />
        <stop offset=".35" stopColor="#6c68a6" />
        <stop offset=".6" stopColor="#716da8" />
        <stop offset=".85" stopColor="#67659a" />
        <stop offset="1" stopColor="#5a5784" />
      </linearGradient>
    </defs>
    <Fan stops={bodyStops} clip="body" />
    <Fan stops={floorStops} clip="floor" />
    <ellipse cx="515.500" cy="185.500" rx="85" ry="49" fill="url(#mouth)" stroke="#e9b566" strokeWidth="1.500" />
    <ellipse cx="515" cy="463" rx="170" ry="98" fill="none" stroke="#e9b04f" strokeWidth="1.500" />
    <path d="M430 182L348 438L346 450M601 182L682 438L684 450" fill="none" stroke="#d9a85a" strokeWidth="1.500" />
    <path d="M430 182L348 438L346 450M601 182L682 438L684 450" fill="none" stroke="#4a4760" strokeWidth="1" strokeDasharray="2 2" />
    <path d="M515 185V463M515 463L380 541" stroke="#33305c" strokeWidth="1" />
    <path d="M515 463V444" stroke="#10109a" strokeWidth="2" />
    <path d="M512.500 449l2.500-9 2.500 9z" fill="#10109a" />
    <path d="M515 463L500 455" stroke="#c81428" strokeWidth="2" />
    <path d="M494 451l9 2-3 4z" fill="#c81428" />
    <path d="M515 463L486 479" stroke="#17a02c" strokeWidth="1.500" />
    <path d="M495 475l6-6 2 4z" fill="#17a02c" />
    <circle cx="515" cy="463" r="3" fill="#d8d820" stroke="#8a8a10" strokeWidth=".5" />
    <text x="511" y="437" fontSize="9" fill="#1a1a9a">Z</text>
    <text x="485" y="452" fontSize="9" fill="#d02038">X</text>
    <text x="484" y="481" fontSize="8" fill="#3fae5c">Y</text>
    <path d="M351 282.500L501 198L499 195L513 196.500L505 207L504 203Z" fill="#f5261a" />
    <path d="M320 546.500L371 540L370 536.500L382 541.500L371 548L371 545Z" fill="#f5261a" />
    <g strokeLinejoin="round">
      <path d="M979 567L1002 555L1025 566L1002 579Z" fill="#fff" stroke="#b5b5b5" />
      <path d="M979 567L1002 579V604L982 592Z" fill="#fdfdfd" stroke="#b5b5b5" />
      <path d="M1025 566L1002 579V604L1023 590Z" fill="#f1f1f1" stroke="#b5b5b5" />
      <path d="M1002 579V564" stroke="#8c94dc" />
      <path d="M1002 579L992 573" stroke="#e06a6a" />
      <path d="M1002 579L992 585" stroke="#7ac87a" />
      <circle cx="1002" cy="579" r="1.500" fill="#b98c4a" />
      <text x="0" y="0" fontSize="5" fill="#667" transform="translate(997 565) rotate(14)">TOP</text>
      <text x="0" y="0" fontSize="5" fill="#667" transform="translate(985 584) rotate(24)">BACK</text>
      <text x="0" y="0" fontSize="5" fill="#667" transform="translate(1008 591) rotate(-20)">LEFT</text>
    </g>
  </Scene>
);

/* ---------- data ---------- */

type ToolDef = { icon: string; label: string; off?: boolean; arrow?: boolean };

const groups: { title: string; width: number; tools: ToolDef[] }[] = [
  { title: "自由形式", width: 39, tools: [{ icon: "subdivide", label: "细分建模" }] },
  {
    title: "曲面",
    width: 283,
    tools: [
      { icon: "extrudeSurf", label: "拉伸" },
      { icon: "revolveSurf", label: "旋转" },
      { icon: "sweepSurf", label: "扫描" },
      { icon: "loft", label: "蓝面" },
      { icon: "boundary", label: "边界" },
      { icon: "redefine", label: "重新定义" },
      { icon: "offset", label: "等距" },
      { icon: "copySurf", label: "复制" },
      { icon: "ruled", label: "直纹" },
      { icon: "flatten", label: "曲面展平" },
    ],
  },
  {
    title: "曲线",
    width: 283,
    tools: [
      { icon: "keypoint", label: "关键点", arrow: true },
      { icon: "intersectCrv", label: "相交" },
      { icon: "project", label: "投影", arrow: true },
      { icon: "helix", label: "螺旋曲线" },
      { icon: "crossProject", label: "相互投影" },
      { icon: "contour", label: "沿面" },
      { icon: "isocline", label: "等斜度" },
      { icon: "derive", label: "派生" },
      { icon: "splitCrv", label: "分割", off: true },
      { icon: "crossPoint", label: "交点" },
    ],
  },
  {
    title: "修改曲面",
    width: 224,
    tools: [
      { icon: "extend", label: "延伸" },
      { icon: "trim", label: "裁剪" },
      { icon: "intersectGray", label: "相交", off: true },
      { icon: "replaceGray", label: "替换面", off: true },
      { icon: "splitSurf", label: "分割" },
      { icon: "stitch", label: "缝合", arrow: true },
      { icon: "partingSplit", label: "分型分割", arrow: true },
      { icon: "bluedot", label: "蓝点" },
    ],
  },
  {
    title: "参考几何体",
    width: 98,
    tools: [
      { icon: "plane", label: "重合平面" },
      { icon: "plane", label: "更多平面", arrow: true },
      { icon: "csys", label: "坐标系" },
    ],
  },
];

const menuTabs = ["特征草图", "曲面", "PMI", "评估", "仿真", "3D 打印", "工具", "视图", "数据管理", "扩展工具"];

const commands: ToolDef[] = [
  { icon: "parallelogram", label: "相切" },
  { icon: "sketch", label: "草图" },
  { icon: "solid", label: "拉伸" },
  { icon: "cutGray", label: "除料", off: true },
  { icon: "quick", label: "快速建模" },
  { icon: "pattern", label: "阵列" },
  { icon: "axisRed", label: "当前模型的图纸" },
  { icon: "round", label: "倒圆" },
  { icon: "sweep", label: "扫掠" },
  { icon: "sketch3d", label: "3D 草图" },
];

type TreeDef = {
  level: number;
  label: string;
  icons: string[];
  check?: boolean;
  expander?: "open" | "closed";
  tone?: string;
  bold?: boolean;
};

const treeTop: TreeDef[] = [
  { level: 0, label: "异形弹簧.par", icons: ["partL", "lock"] },
  { level: 1, label: "Base", icons: ["base"], check: true },
  { level: 1, label: "材料 (无)", icons: ["material"] },
  { level: 1, label: "基本参考平面", icons: ["planeGray"], check: false, expander: "closed", tone: "dim" },
  { level: 1, label: "构造体", icons: ["construct"], check: true, expander: "open" },
  { level: 2, label: "曲面体_1", icons: ["bodyBox"], check: true },
];

const treeHistory: TreeDef[] = [
  { level: 2, label: "旋转 1", icons: ["revolve"], check: true, tone: "hot", bold: true },
  { level: 2, label: "草图 3", icons: ["sketch"], check: true, bold: true },
  { level: 2, label: "草图 4", icons: ["sketch"], check: true, bold: true },
  { level: 2, label: "扫掠 1", icons: ["loop", "sweep"], check: false, tone: "dim" },
  { level: 2, label: "相交 1", icons: ["loop", "intersectS"], check: false, tone: "dim" },
  { level: 2, label: "草图 5", icons: ["loop", "sketch"], check: false, tone: "dim" },
  { level: 2, label: "拉伸 1", icons: ["loop", "sweep"], tone: "dim" },
];

const files: [string, string][] = [
  ["cloud", "OneDrive - Personal"],
  ["pc", "此电脑"],
  ["libs", "库"],
  ["user", "Administrator"],
  ["network", "网络"],
  ["folder", "DIY资料包"],
  ["folder", "钣金教程"],
  ["folder", "待分类"],
  ["folder", "浩辰3D进阶课程"],
  ["part", "扭力弹簧.par"],
  ["folderLink", "演示文档"],
  ["part", "异形弹簧.par"],
];

const TreeLine = ({ level, label, icons, check, expander, tone, bold }: TreeDef) => (
  <TreeRow $level={level}>
    {level > 0 && (
      <Slot>{expander && <Expander $closed={expander === "closed"} aria-label={`展开 ${label}`} />}</Slot>
    )}
    {level > 0 && (
      <Slot>{check !== undefined && <Check type="checkbox" defaultChecked={check} aria-label={label} />}</Slot>
    )}
    <Node $tone={tone} $bold={bold}>
      {icons.map((n) => (
        <Icon key={n} name={n} size={10} />
      ))}
      {label}
    </Node>
  </TreeRow>
);

const quick: [string, string, boolean][] = [
  ["file", "新建", true],
  ["|", "", false],
  ["open", "打开", false],
  ["back", "返回", false],
  ["|", "", false],
  ["save", "保存", false],
  ["globe", "发布", true],
  ["|", "", false],
  ["listbox", "属性", false],
  ["|", "", false],
  ["undo", "撤销", true],
  ["redo", "重做", true],
  ["|", "", false],
  ["axisRed", "图纸", false],
  ["axisGreen", "钣金", true],
  ["drop", "自定义", false],
];

const App = () => (
  <AppWindow>
    <GlobalStyle />
    <SharedGradients />
    <Header>
      <Logo>
        <svg viewBox="0 0 24 24" width="22" height="22" aria-label="浩辰3D">
          <path d="M21 4H12Q4 5 3 13Q3 20 11 20Q18 19 19 11H11L10 14H14Q13 17 10 17Q6 16 8 11Q10 8 14 8H19Z" fill="#1795d8" />
          <path d="M19 11Q18 19 11 20Q5 20 3 16Q9 19 14 14Z" fill="#1b57b4" />
        </svg>
      </Logo>
      <HeaderRows>
        <TitleRow>
          <QuickBar>
            {quick.map(([icon, label, wide], i) =>
              icon === "|" ? (
                <QuickDivider key={i} />
              ) : (
                <QuickButton key={i} $wide={wide} aria-label={label}>
                  <Icon name={icon} size={icon === "drop" ? 6 : 10} />
                </QuickButton>
              )
            )}
          </QuickBar>
          <Title>浩辰3D 2023 - 顺序建模零件 - [异形弹簧.par]</Title>
          <WindowButtons>
            <button aria-label="最小化"><Icon name="min" size={8} /></button>
            <button aria-label="还原"><Icon name="restore" size={8} /></button>
            <button aria-label="关闭"><Icon name="close" size={6} /></button>
          </WindowButtons>
        </TitleRow>
        <TabRow>
          {menuTabs.map((t) => (
            <MenuTab key={t} $active={t === "曲面"}>{t}</MenuTab>
          ))}
          <TabSpace />
          <WindowButtons>
            <button aria-label="帮助"><Icon name="help" size={9} /></button>
            <button aria-label="最小化文档"><Icon name="min" size={6} /></button>
            <button aria-label="还原文档"><Icon name="restore" size={6} /></button>
            <button aria-label="关闭文档"><Icon name="close" size={4} /></button>
          </WindowButtons>
        </TabRow>
      </HeaderRows>
    </Header>

    <Ribbon>
      {groups.map((g) => (
        <Group key={g.title} $w={g.width}>
          <GroupItems>
            {g.tools.map((t) => (
              <Tool key={t.label} $chars={t.label.length} $off={t.off}>
                <Icon name={t.icon} size={20} />
                <ToolLabel>{t.label}</ToolLabel>
                {t.arrow && <ToolArrow />}
              </Tool>
            ))}
          </GroupItems>
          <GroupTitle>{g.title}</GroupTitle>
        </Group>
      ))}
    </Ribbon>

    <CommandBand>
      <CommandBar>
        <Grip />
        {commands.map((c) => (
          <Command key={c.label} $off={c.off}>
            <Icon name={c.icon} size={10} />
            {c.label}
          </Command>
        ))}
      </CommandBar>
    </CommandBand>

    <Main>
      <SelectPanel>
        <PanelHeader>
          <Icon name="panelBlue" size={10} />
          <PanelTitle>选择</PanelTitle>
          <Icon name="drop" size={7} />
          <Icon name="pin" size={7} />
        </PanelHeader>
      </SelectPanel>

      <WorkColumn>
        <WorkRow>
          <Documents>
            <DocTabs>
              <DocTab>
                <Icon name="part" size={11} />
                扭力弹簧.par
                <Icon name="close" size={7} />
              </DocTab>
              <DocTab $active>
                <Icon name="part" size={11} />
                异形弹簧.par
                <Icon name="close" size={7} />
              </DocTab>
              <DocNav>
                <Icon name="triL" size={8} />
                <Icon name="triR" size={8} />
                <Icon name="tri" size={8} />
                <Icon name="close" size={8} />
              </DocNav>
            </DocTabs>
            <Canvas>
              <ConeScene />
              <TreeGrip />
              <Tree>
                {treeTop.map((t) => (
                  <TreeLine key={t.label} {...t} />
                ))}
                <TreeRow $level={1}>
                  <Slot>
                    <Expander aria-label="折叠 顺序建模" />
                  </Slot>
                  <HistoryBar>
                    顺序建模
                    <HistoryEnd />
                  </HistoryBar>
                </TreeRow>
                {treeHistory.map((t) => (
                  <TreeLine key={t.label} {...t} />
                ))}
              </Tree>
              <RedFrame />
              <Annotation $x={147} $y={153}>扫掠路径</Annotation>
              <Annotation $x={113} $y={420}>扫掠截面</Annotation>
            </Canvas>
          </Documents>

          <Library>
            <PanelHeader>
              <Icon name="libFolder" size={12} />
              <PanelTitle>特征库</PanelTitle>
              <Icon name="drop" size={7} />
              <Icon name="pin" size={7} />
              <Icon name="close" size={8} />
            </PanelHeader>
            <LibTools>
              {["plus", "home", "arrowL", "arrowR", "up", "newFolder"].map((n) => (
                <LibButton key={n} aria-label={n}>
                  <Icon name={n} size={10} />
                </LibButton>
              ))}
              <LibButton $wide aria-label="视图">
                <Icon name="grid" size={11} />
                <Icon name="tri" size={5} />
              </LibButton>
              <LibButton aria-label="搜索">
                <Icon name="search" size={10} />
              </LibButton>
            </LibTools>
            <Location>
              <Icon name="desktop" size={10} />
              <LocationSelect aria-label="位置">
                <option>桌面</option>
              </LocationSelect>
              <Icon name="chevron" size={6} />
            </Location>
            <Files>
              {files.map(([icon, name]) => (
                <FileRow key={name}>
                  <Icon name={icon} size={10} />
                  {name}
                </FileRow>
              ))}
            </Files>
          </Library>

          <SideStrip>
            <SideTab>
              <Icon name="axisGreen" size={8} />
              传感器
            </SideTab>
          </SideStrip>
        </WorkRow>

        <PromptBar>
          <PromptTitle>
            <Icon name="prompt" size={12} />
            提示条
          </PromptTitle>
          <PromptText>
            单击草图命令以创建将用作“实体”命令的输入的草图，或单击“实体”命令创建基本特征。
          </PromptText>
          <PromptTools>
            <span>A</span>
            <span>A</span>
            <Icon name="caretUp" size={6} />
            <Icon name="drop" size={7} />
            <Icon name="pin" size={7} />
            <Icon name="close" size={7} />
          </PromptTools>
        </PromptBar>
      </WorkColumn>
    </Main>

    <StatusBar>
      <StatusText $grow={668}>旋转 1</StatusText>
      <StatusText $grow={168}>选择了 0 项</StatusText>
      <StatusTools>
        <CommandSearch placeholder="查找命令" aria-label="查找命令" />
        {["goArrow", "zoomArea", "search", "fit", "pan", "rotateG", "views", "shade", "color"].map((n) => (
          <StatusButton key={n} aria-label={n}>
            <Icon name={n} size={10} />
          </StatusButton>
        ))}
        <StatusDivider />
        <Icon name="minusC" size={9} />
        <Zoom type="range" aria-label="缩放" defaultValue={45} />
        <Icon name="plusC" size={9} />
        <StatusDivider />
        <Icon name="play" size={10} />
        <StatusDivider />
        <Icon name="record" size={9} />
        <StatusDivider />
        <Icon name="upload" size={8} />
      </StatusTools>
    </StatusBar>

    <Watermark>头条 @浩辰软件</Watermark>
  </AppWindow>
);

export default App;
